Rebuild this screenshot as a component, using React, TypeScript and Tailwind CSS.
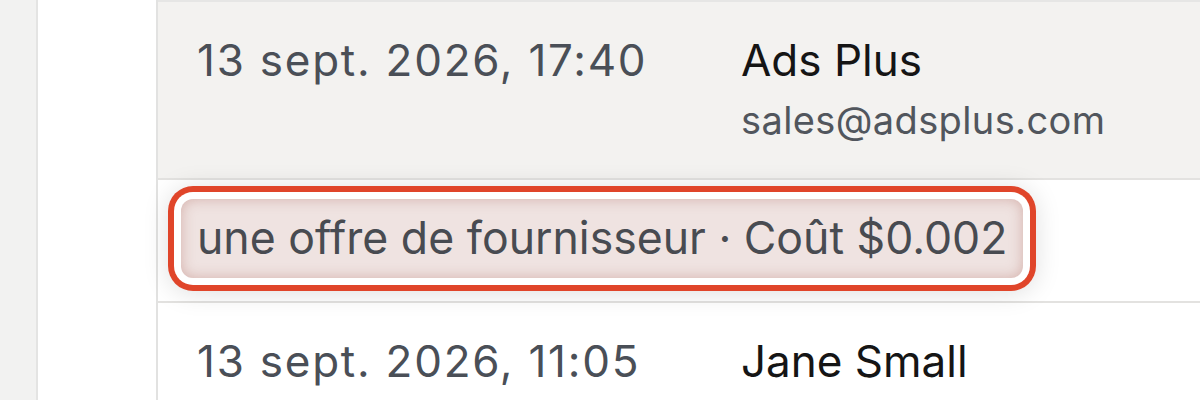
const rows = [
  { date: "13 sept. 2026, 17:40", name: "Ads Plus", email: "sales@adsplus.com" },
  { date: "13 sept. 2026, 11:05", name: "Jane Small" },
];

function LogRow({ date, name, email, active }: { date: string; name: string; email?: string; active?: boolean }) {
  return (
    <div
      className={`flex h-[178px] shrink-0 border-b-2 border-[#e3e2e0] pl-[39px] pt-[30px] ${
        active ? "bg-[#f3f2f0]" : "bg-white"
      }`}
    >
      <div className="w-[544px] shrink-0 text-[44px] leading-[57px] tracking-[0.04em] text-[#4a4f57]">{date}</div>
      <div className="flex flex-col">
        <span className="text-[44px] leading-[57px] text-[#151515]">{name}</span>
        {email && (
          <span className="mt-[5px] text-[38px] leading-[52px] tracking-[0.01em] text-[#51565d]">{email}</span>
        )}
      </div>
    </div>
  );
}

export default function App() {
  return (
    <div className="flex h-screen overflow-hidden bg-white font-['Inter',sans-serif]">
      <div className="w-[38px] shrink-0 border-r-2 border-[#e4e4e3] bg-[#f2f2f1]" />
      <div className="w-[120px] shrink-0 border-r-2 border-[#e2e2e1] bg-white" />
      <main className="flex flex-1 flex-col border-t-2 border-[#e6e6e5]">
        <LogRow {...rows[0]} active />
        <div className="flex h-[123px] shrink-0 items-center border-b-2 border-[#e3e2e0] bg-white pl-[23px]">
          <span className="relative z-10 -mt-[4px] rounded-[12px] bg-[#efe3e1] px-[16px] py-[9px] text-[44.6px] leading-[61px] text-[#484b51] shadow-[inset_0_0_14px_rgba(170,95,85,0.38),0_0_0_7px_#ffffff,0_0_0_13px_#e0452a,0_2px_26px_13px_rgba(0,0,0,0.13)]">
            une offre de fournisseur · Coût $0.002
          </span>
        </div>
        <LogRow {...rows[1]} />
      </main>
    </div>
  );
}
